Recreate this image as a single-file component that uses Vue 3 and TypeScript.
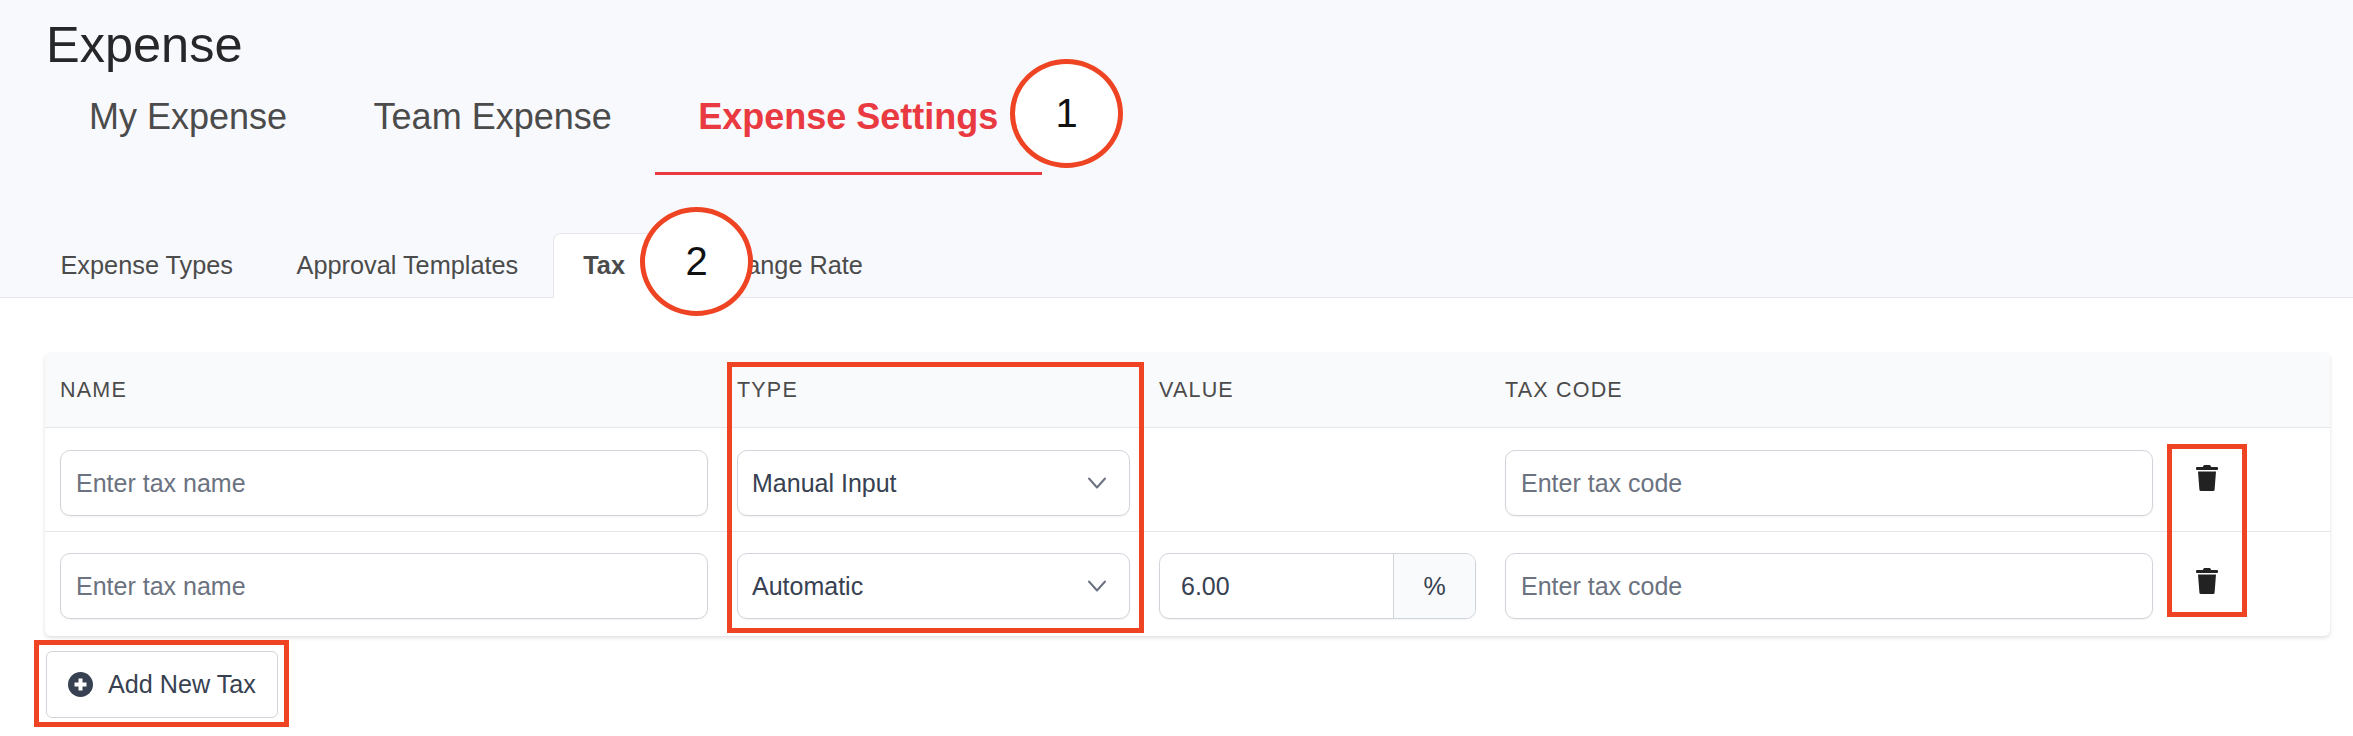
<script setup lang="ts">
interface TaxRow {
  type: string
  value: string | null
}

const navTabs = ['My Expense', 'Team Expense', 'Expense Settings']
const subTabs = ['Expense Types', 'Approval Templates', 'Tax', 'Exchange Rate']
const columns = ['Name', 'Type', 'Value', 'Tax Code', '']
const rows: TaxRow[] = [
  { type: 'Manual Input', value: null },
  { type: 'Automatic', value: '6.00' }
]
</script>

<template>
  <div class="page">
    <header class="head">
      <h1 class="title">Expense</h1>
      <nav class="nav">
        <a v-for="tab in navTabs" :key="tab" class="nav-tab" :class="{ active: tab === 'Expense Settings' }">{{ tab }}</a>
      </nav>
      <div class="subnav">
        <a v-for="tab in subTabs" :key="tab" class="sub-tab" :class="{ active: tab === 'Tax' }">{{ tab }}</a>
      </div>
    </header>

    <section class="table">
      <div class="grid thead">
        <div v-for="col in columns" :key="col" class="th">{{ col }}</div>
      </div>
      <div v-for="row in rows" :key="row.type" class="grid row">
        <div class="cell"><input class="field" placeholder="Enter tax name" /></div>
        <div class="cell">
          <div class="select">
            <span>{{ row.type }}</span>
            <svg class="chevron" viewBox="0 0 20 12" width="20" height="12" fill="none" stroke="#6b7280" stroke-width="2" stroke-linecap="round" stroke-linejoin="round">
              <path d="M2 1.5l8 9 8-9" />
            </svg>
          </div>
        </div>
        <div class="cell">
          <div v-if="row.value" class="group">
            <span class="group-value">{{ row.value }}</span>
            <span class="addon">%</span>
          </div>
        </div>
        <div class="cell"><input class="field" placeholder="Enter tax code" /></div>
        <div class="cell action">
          <svg viewBox="0 0 22 26" width="22" height="26" fill="#222">
            <path d="M8 0h6l1.2 2H6.800z" />
            <rect x="0" y="2" width="22" height="3" rx="1" />
            <path d="M2 6.500h18l-1.400 18a1.500 1.500 0 0 1-1.500 1.500H4.900a1.500 1.500 0 0 1-1.500-1.500z" />
          </svg>
        </div>
      </div>
    </section>

    <button class="add" type="button">
      <svg viewBox="0 0 25 25" width="25" height="25">
        <circle cx="12.500" cy="12.500" r="12.500" fill="#374151" />
        <path d="M12.500 6.500v12M6.500 12.500h12" stroke="#fff" stroke-width="4" />
      </svg>
      <span>Add New Tax</span>
    </button>

    <div class="mark mark-one">1</div>
    <div class="mark mark-two">2</div>
    <div class="box box-type"></div>
    <div class="box box-trash"></div>
    <div class="box box-add"></div>
  </div>
</template>

<style>
html, body { margin: 0; background: #fff; }
</style>

<style scoped>
.page {
  position: relative;
  width: 2353px;
  height: 736px;
  overflow: hidden;
  background: #fff;
  font-family: "Liberation Sans", Arial, sans-serif;
  color: #374151;
}
.head {
  box-sizing: border-box;
  height: 298px;
  background: #f8f9fc;
  border-bottom: 1px solid #e5e7eb;
}
.title {
  margin: 0;
  padding: 17px 0 0 46px;
  font-size: 50.500px;
  line-height: 56px;
  font-weight: 400;
  color: #27272a;
}
.nav {
  display: flex;
  padding: 24px 0 0 45.750px;
}
.nav-tab {
  padding: 0 43.250px 35px;
  font-size: 36px;
  line-height: 40px;
  color: #4b4b4b;
  border-bottom: 3px solid transparent;
}
.nav-tab.active {
  font-weight: 700;
  color: #ea3a41;
  border-bottom-color: #ea3a41;
}
.subnav {
  display: flex;
  gap: 5.500px;
  margin-top: 58px;
  padding-left: 31.500px;
}
.sub-tab {
  box-sizing: border-box;
  height: 65px;
  padding: 16px 28px 0;
  font-size: 25.300px;
  line-height: 30px;
  color: #4b4b4b;
  border: 1px solid transparent;
  border-bottom: 0;
  border-radius: 8px 8px 0 0;
}
.sub-tab.active {
  padding: 16px 29.500px 0;
  font-weight: 700;
  background: #fff;
  border-color: #e5e7eb;
}
.table {
  margin: 55px 23px 0 45px;
  border-radius: 6px;
  background: #fff;
  box-shadow: 0 2px 4px rgba(0, 0, 0, 0.12), 0 0 2px rgba(0, 0, 0, 0.04);
}
.grid {
  display: grid;
  grid-template-columns: 677px 422px 346px 677px 163px;
}
.thead {
  height: 75px;
  box-sizing: border-box;
  align-items: center;
  background: #f9fafb;
  border-bottom: 1px solid #e5e7eb;
  border-radius: 6px 6px 0 0;
}
.th {
  padding: 0 15px;
  font-size: 21.500px;
  letter-spacing: 1.200px;
  text-transform: uppercase;
  color: #4b4b4b;
}
.row {
  box-sizing: border-box;
  height: 104px;
  padding: 22px 0 15px;
  border-bottom: 1px solid #e5e7eb;
}
.row:last-child {
  padding-top: 21px;
  border-bottom: 0;
}
.cell {
  padding: 0 14px 0 15px;
}
.action {
  padding: 15px 0 0 29px;
}
.field,
.select,
.group {
  box-sizing: border-box;
  width: 100%;
  height: 66px;
  border: 1px solid #d1d5db;
  border-radius: 10px;
  background: #fff;
  box-shadow: 0 1px 2px rgba(0, 0, 0, 0.05);
  font-family: inherit;
  font-size: 25px;
  color: #374151;
}
.field {
  display: block;
  padding: 0 15px;
  outline: none;
}
.field::placeholder {
  color: #6b7280;
  opacity: 1;
}
.select {
  display: flex;
  align-items: center;
  justify-content: space-between;
  padding: 0 22px 0 14px;
}
.chevron {
  flex: none;
}
.group {
  display: flex;
  overflow: hidden;
}
.group-value {
  flex: 1;
  align-self: center;
  padding-left: 21px;
}
.addon {
  flex: none;
  display: flex;
  align-items: center;
  justify-content: center;
  width: 81px;
  background: #f9fafb;
  border-left: 1px solid #d1d5db;
}
.add {
  display: flex;
  align-items: center;
  gap: 15px;
  box-sizing: border-box;
  width: 232px;
  height: 67px;
  margin: 15px 0 0 46px;
  padding: 0 0 0 21px;
  background: #fff;
  border: 1px solid #d1d5db;
  border-radius: 6px;
  font-family: inherit;
  font-size: 25.200px;
  color: #374151;
}
.mark {
  position: absolute;
  box-sizing: border-box;
  display: flex;
  align-items: center;
  justify-content: center;
  width: 113px;
  height: 109px;
  border: 5px solid #ee4423;
  border-radius: 50%;
  background: #fff;
  font-size: 40px;
  color: #111;
}
.mark-one {
  left: 1010px;
  top: 59px;
}
.mark-two {
  left: 640px;
  top: 207px;
}
.box {
  position: absolute;
  box-sizing: border-box;
  border: 5px solid #ee4423;
}
.box-type {
  left: 727px;
  top: 362px;
  width: 417px;
  height: 271px;
}
.box-trash {
  left: 2167px;
  top: 444px;
  width: 80px;
  height: 173px;
}
.box-add {
  left: 34px;
  top: 640px;
  width: 255px;
  height: 87px;
}
</style>
